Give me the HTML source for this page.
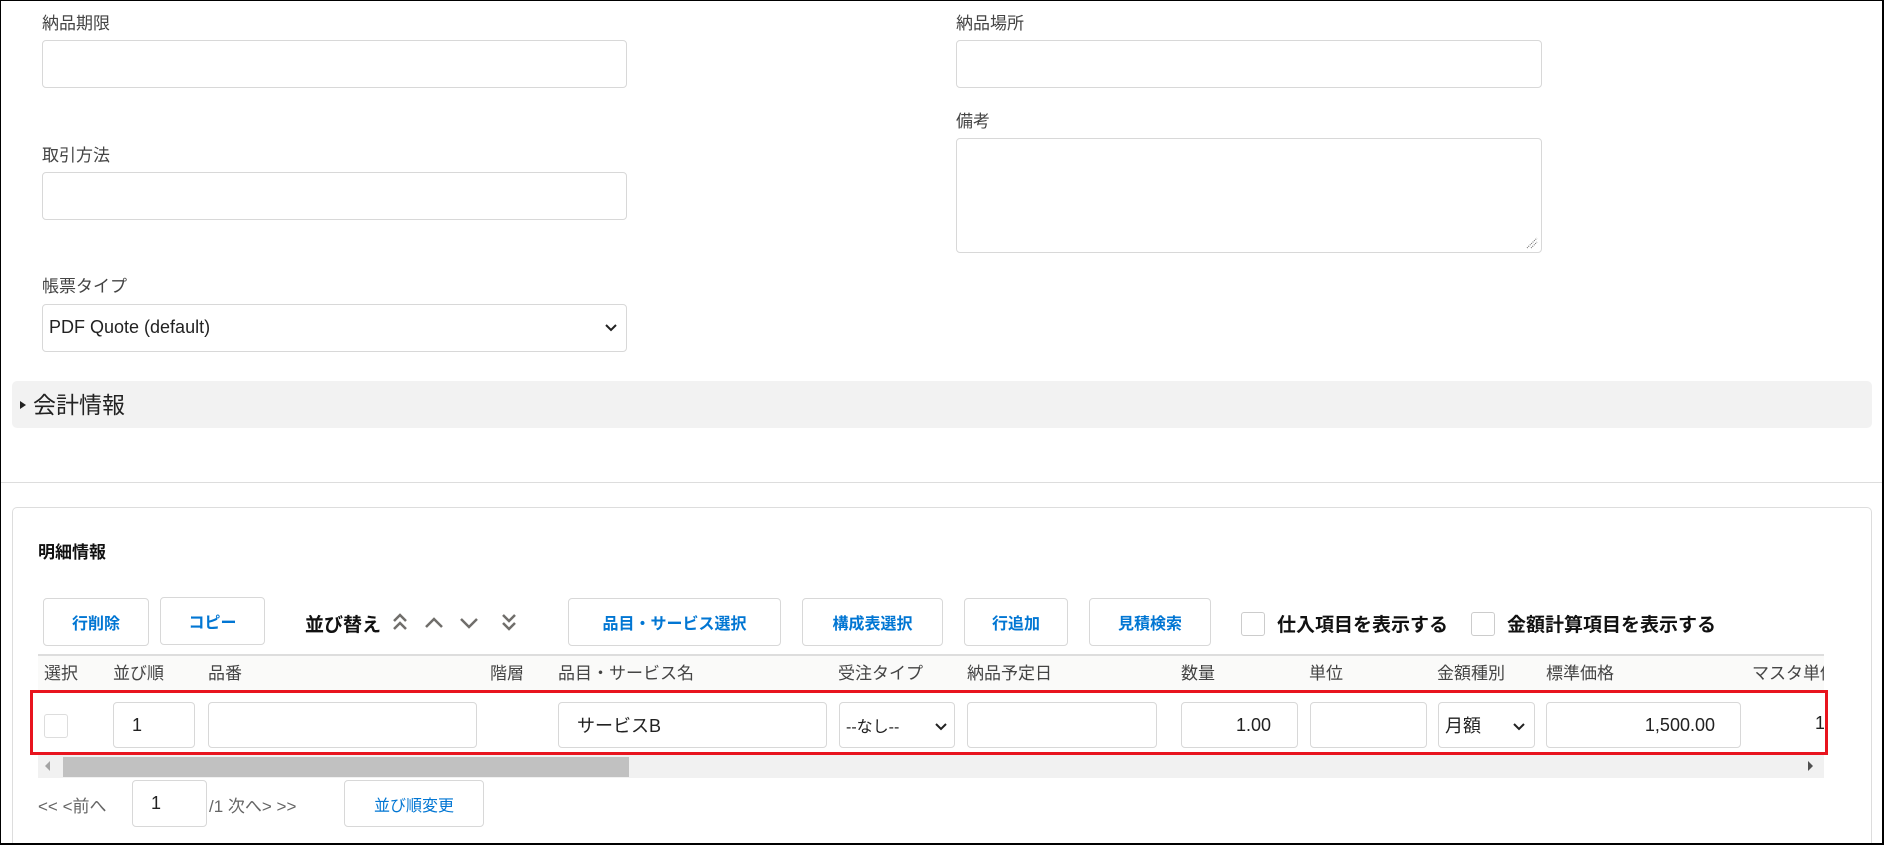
<!DOCTYPE html>
<html style="width:1884px;height:845px;overflow:hidden"><head><meta charset="utf-8"><style>
*{box-sizing:border-box;margin:0;padding:0}
body{width:1884px;height:845px;overflow:hidden;background:#fff;font-family:"Liberation Sans","Noto Sans CJK JP",sans-serif;color:#3e3e3c;position:relative}
.a{position:absolute}
.lbl{font-size:17px;color:#444;line-height:20px}
.inp{position:absolute;border:1px solid #d8d8d8;border-radius:4px;background:#fff}
.btn{position:absolute;top:598px;height:48px;border:1px solid #d8d8d8;border-radius:4px;background:#fff;color:#0176d3;font-weight:bold;font-size:16px;display:flex;align-items:center;justify-content:center}
.th{position:absolute;top:664px;font-size:17px;color:#444;line-height:20px}
.ri{position:absolute;top:702px;height:46px;border:1px solid #d8d8d8;border-radius:4px;background:#fff;font-size:18px;color:#222;display:flex;align-items:center}
.cb{position:absolute;width:24px;height:24px;border:1px solid #ccc;border-radius:3px;background:#fff}
</style></head><body>

<div class="a lbl" style="left:42px;top:14px">納品期限</div>
<div class="inp" style="left:42px;top:40px;width:585px;height:48px"></div>
<div class="a lbl" style="left:956px;top:14px">納品場所</div>
<div class="inp" style="left:956px;top:40px;width:586px;height:48px"></div>
<div class="a lbl" style="left:956px;top:112px">備考</div>
<div class="inp" style="left:956px;top:138px;width:586px;height:115px">
<svg class="a" style="right:3px;bottom:3px" width="12" height="12"><path d="M1 11L11 1M5 11L11 5" stroke="#666" stroke-width="1" stroke-dasharray="1 1"/></svg></div>
<div class="a lbl" style="left:42px;top:146px">取引方法</div>
<div class="inp" style="left:42px;top:172px;width:585px;height:48px"></div>
<div class="a lbl" style="left:42px;top:277px">帳票タイプ</div>
<div class="inp" style="left:42px;top:304px;width:585px;height:48px;font-size:18px;color:#222;padding:12px 0 0 6px">PDF Quote (default)
<svg class="a" style="right:8px;top:18px" width="14" height="10"><path d="M2 2L7 7L12 2" stroke="#222" stroke-width="2" fill="none"/></svg></div>

<div class="a" style="left:12px;top:381px;width:1860px;height:47px;background:#f2f2f2;border-radius:5px"></div>
<svg class="a" style="left:19px;top:400px" width="8" height="10"><path d="M1 1L7 5L1 9Z" fill="#222"/></svg>
<div class="a" style="left:33px;top:391px;font-size:23px;color:#222;line-height:28px">会計情報</div>

<div class="a" style="left:0;top:482px;width:1884px;height:1px;background:#ddd"></div>
<div class="a" style="left:12px;top:507px;width:1860px;height:338px;border:1px solid #ddd;border-bottom:none;border-radius:5px 5px 0 0"></div>
<div class="a" style="left:38px;top:538px;font-size:17px;font-weight:bold;color:#111">明細情報</div>

<div class="btn" style="left:43px;width:106px">行削除</div>
<div class="btn" style="left:160px;width:105px;top:597px">コピー</div>
<div class="a" style="left:305px;top:610px;font-size:19px;font-weight:bold;color:#111">並び替え</div>
<svg class="a" style="left:390px;top:610px" width="130" height="26">
<g stroke="#706e6b" stroke-width="2.5" fill="none">
<path d="M4 11L10 5L16 11M4 19L10 13L16 19"/>
<path d="M36 17L44 9L52 17"/>
<path d="M71 9L79 17L87 9"/>
<path d="M113 5L119 11L125 5M113 13L119 19L125 13"/></g></svg>
<div class="btn" style="left:568px;width:213px">品目・サービス選択</div>
<div class="btn" style="left:802px;width:141px">構成表選択</div>
<div class="btn" style="left:964px;width:104px">行追加</div>
<div class="btn" style="left:1089px;width:122px">見積検索</div>
<div class="cb" style="left:1241px;top:612px"></div>
<div class="a" style="left:1277px;top:610px;font-size:19px;font-weight:bold;color:#111">仕入項目を表示する</div>
<div class="cb" style="left:1471px;top:612px"></div>
<div class="a" style="left:1507px;top:610px;font-size:19px;font-weight:bold;color:#111">金額計算項目を表示する</div>

<div class="a" style="left:38px;top:654px;width:1786px;height:36px;background:#fafaf9;border-top:2px solid #ddd"></div>
<div class="th" style="left:44px">選択</div>
<div class="th" style="left:113px">並び順</div>
<div class="th" style="left:208px">品番</div>
<div class="th" style="left:490px">階層</div>
<div class="th" style="left:558px">品目・サービス名</div>
<div class="th" style="left:838px">受注タイプ</div>
<div class="th" style="left:967px">納品予定日</div>
<div class="th" style="left:1181px">数量</div>
<div class="th" style="left:1309px">単位</div>
<div class="th" style="left:1437px">金額種別</div>
<div class="th" style="left:1546px">標準価格</div>
<div class="th" style="left:1752px;width:72px;overflow:hidden;white-space:nowrap">マスタ単価</div>

<div class="a" style="left:38px;top:690px;width:1786px;height:65px;background:#fff"></div>
<div class="cb" style="left:44px;top:714px;border-color:#ddd"></div>
<div class="ri" style="left:113px;width:82px;padding-left:18px">1</div>
<div class="ri" style="left:208px;width:269px"></div>
<div class="ri" style="left:558px;width:269px;padding-left:18px">サービスB</div>
<div class="ri" style="left:839px;width:116px;padding-left:6px;font-size:16px">--なし--
<svg class="a" style="right:6px;top:19px" width="14" height="10"><path d="M2 2L7 7L12 2" stroke="#222" stroke-width="2" fill="none"/></svg></div>
<div class="ri" style="left:967px;width:190px"></div>
<div class="ri" style="left:1181px;width:117px;justify-content:flex-end;padding-right:26px">1.00</div>
<div class="ri" style="left:1310px;width:117px"></div>
<div class="ri" style="left:1438px;width:97px;padding-left:6px">月額
<svg class="a" style="right:8px;top:19px" width="14" height="10"><path d="M2 2L7 7L12 2" stroke="#222" stroke-width="2" fill="none"/></svg></div>
<div class="ri" style="left:1546px;width:195px;justify-content:flex-end;padding-right:25px">1,500.00</div>
<div class="a" style="left:1815px;top:713px;width:9px;overflow:hidden;font-size:18px;color:#222">1</div>
<div class="a" style="left:30px;top:690px;width:1798px;height:65px;border:3px solid #e8141e"></div>

<div class="a" style="left:38px;top:755px;width:1786px;height:23px;background:#f1f1f1"></div>
<div class="a" style="left:63px;top:757px;width:566px;height:20px;background:#c1c1c1"></div>
<svg class="a" style="left:44px;top:760px" width="8" height="12"><path d="M6 1L1 6L6 11Z" fill="#a3a3a3"/></svg>
<svg class="a" style="left:1806px;top:760px" width="8" height="12"><path d="M2 1L7 6L2 11Z" fill="#505050"/></svg>

<div class="a" style="left:38px;top:792px;font-size:17px;color:#666">&lt;&lt; &lt;前へ</div>
<div class="inp" style="left:132px;top:780px;width:75px;height:47px;font-size:18px;color:#222;padding:12px 0 0 18px">1</div>
<div class="a" style="left:209px;top:792px;font-size:17px;color:#666">/1 次へ&gt; &gt;&gt;</div>
<div class="inp" style="left:344px;top:780px;width:140px;height:47px;color:#0176d3;font-size:16px;display:flex;align-items:center;justify-content:center">並び順変更</div>

<div class="a" style="left:0;top:0;width:1884px;height:845px;border:1px solid #000;border-right:2px solid #000;border-bottom:2px solid #000;pointer-events:none"></div>
</body></html>
